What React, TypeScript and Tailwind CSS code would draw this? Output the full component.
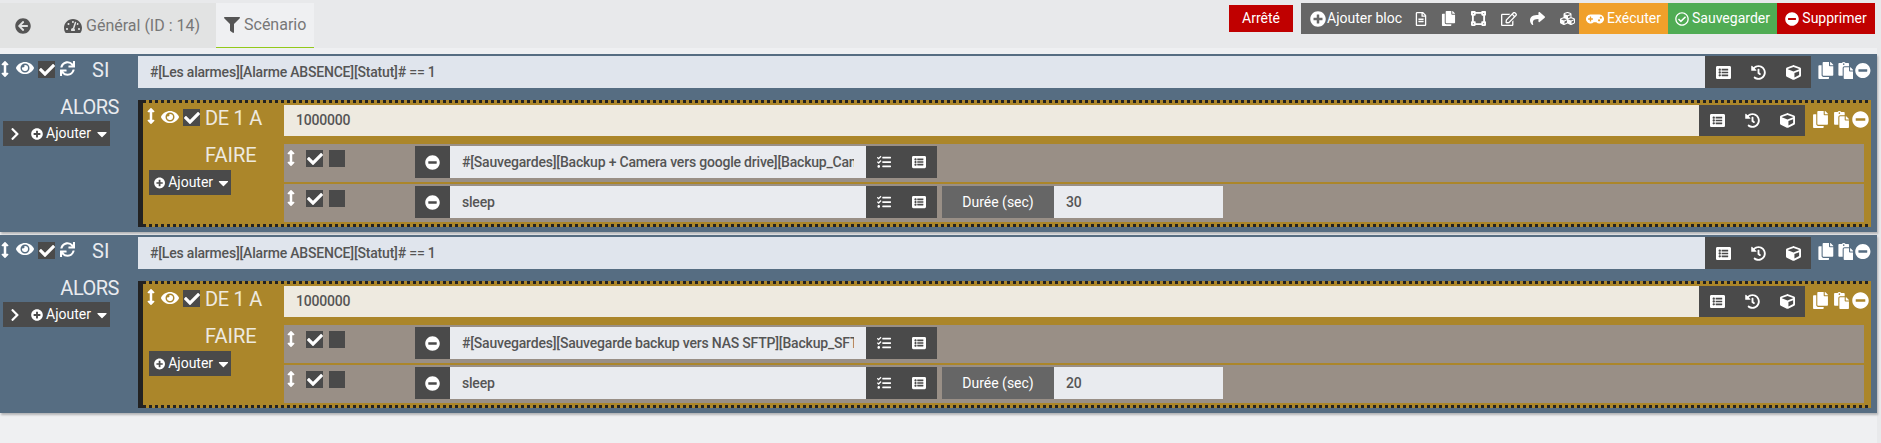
import type { ReactNode } from "react";
import {
  FaArrowCircleLeft,
  FaArrowsAltV,
  FaCaretDown,
  FaCheck,
  FaChevronRight,
  FaCopy,
  FaCube,
  FaCubes,
  FaEye,
  FaFilter,
  FaGamepad,
  FaHistory,
  FaListAlt,
  FaMinusCircle,
  FaPaste,
  FaPlusCircle,
  FaRegCheckCircle,
  FaRegEdit,
  FaRegFileAlt,
  FaShare,
  FaSync,
  FaTachometerAlt,
  FaTasks,
  FaVectorSquare,
} from "react-icons/fa";

const valueText = "text-[14px] font-medium tracking-[-0.2px] text-[#555]";
const titleText = "text-[20px] leading-[24px]";

function CheckBox() {
  return (
    <span className="flex h-[17px] w-[17px] items-center justify-center bg-[#4a4a4a] text-white">
      <FaCheck size={16} />
    </span>
  );
}

function AddButton({ expand, className }: { expand?: boolean; className: string }) {
  return (
    <div className={`flex h-[25px] items-center bg-[#4a4a4a] text-[14px] text-white ${className}`}>
      {expand && <FaChevronRight size={14} className="ml-[5px] mr-[9px]" />}
      <FaPlusCircle size={12} className={expand ? "" : "ml-[5px]"} />
      <span className="ml-[3px]">Ajouter</span>
      <FaCaretDown size={16} className="ml-[3px]" />
    </div>
  );
}

function LineActions({ className }: { className: string }) {
  return (
    <div className={`flex items-center justify-center gap-[20px] bg-[#4a4a4a] text-white ${className}`}>
      <FaListAlt size={15} />
      <FaHistory size={15} />
      <FaCube size={15} />
    </div>
  );
}

function BlockTools({ className }: { className: string }) {
  return (
    <div className={`flex items-start pt-[6px] text-white ${className}`}>
      <FaCopy size={17} />
      <FaPaste size={17} className="ml-[4px]" />
      <FaMinusCircle size={17} className="ml-[2px]" />
    </div>
  );
}

function ActionRow({ title, children }: { title: string; children?: ReactNode }) {
  return (
    <div className="flex h-[38px] items-start bg-[#998f86] pt-[2px]">
      <div className="flex w-[61px] items-start pl-[3px] pt-[4px] text-white">
        <FaArrowsAltV size={16} className="w-[8px]" />
        <span className="ml-[11px]">
          <CheckBox />
        </span>
        <span className="ml-[6px] h-[17px] w-[16px] bg-[#4a4a4a]" />
      </div>
      <div className="ml-[70px] flex h-[32px] w-[35px] items-center justify-center bg-[#4a4a4a] text-white">
        <FaMinusCircle size={15} />
      </div>
      <div className={`flex h-[32px] w-[416px] items-center whitespace-nowrap bg-[#e9ebef] px-[12px] ${valueText}`}>
        <span className="block w-full overflow-hidden">{title}</span>
      </div>
      <div className="flex h-[32px] w-[71px] items-center justify-center gap-[21px] bg-[#4a4a4a] text-white">
        <FaTasks size={14} />
        <FaListAlt size={14} />
      </div>
      {children}
    </div>
  );
}

function DottedStrip() {
  return <div className="h-[3px] bg-[repeating-linear-gradient(90deg,#222_0_3px,transparent_3px_6px)]" />;
}

function Block({ action, delay }: { action: string; delay: string }) {
  return (
    <div className="h-[178px] bg-[#566d82] pr-[6px] pt-[2px] shadow-[1px_2px_2px_rgba(0,0,0,0.25)]">
      {/* Ligne SI */}
      <div className="flex h-[32px]">
        <div className="flex w-[138px] items-start pl-[1px] pt-[5px] text-white">
          <FaArrowsAltV size={16} className="w-[8px]" />
          <FaEye size={18} className="ml-[7px] mt-[-2px]" />
          <span className="ml-[4px]">
            <CheckBox />
          </span>
          <FaSync size={15} className="ml-[5px]" />
          <span className={`ml-[17px] mt-[-3px] text-[#e9ebef] ${titleText}`}>SI</span>
        </div>
        <div className={`flex flex-1 items-center bg-[#e0e5ed] pl-[12px] ${valueText}`}>
          #[Les alarmes][Alarme ABSENCE][Statut]# == 1
        </div>
        <LineActions className="w-[106px]" />
        <BlockTools className="w-[60px] pl-[7px]" />
      </div>

      {/* Ligne ALORS */}
      <div className="mt-[12px] flex">
        <div className="w-[138px]">
          <div className="mt-[-7px] pr-[19px] text-right text-[20px] leading-[28px] tracking-[-0.5px] text-[#e9ebef]">ALORS</div>
          <AddButton expand className="ml-[3px] w-[107px]" />
        </div>

        <div className="flex h-[127px] flex-1 flex-col border-l-[5px] border-[#222] bg-[#ab862a]">
          <DottedStrip />
          <div className="mt-[2px] flex h-[31px]">
            <div className="flex w-[141px] items-start pl-[4px] pt-[4px] text-white">
              <FaArrowsAltV size={16} className="mt-[-1px] w-[8px]" />
              <FaEye size={18} className="ml-[6px] mt-[-1px]" />
              <span className="ml-[4px]">
                <CheckBox />
              </span>
              <span className={`ml-[5px] mt-[-3px] tracking-[-0.3px] text-[#eeeae0] ${titleText}`}>DE 1 A</span>
            </div>
            <div className={`flex flex-1 items-center bg-[#eeeae0] pl-[12px] ${valueText}`}>1000000</div>
            <LineActions className="w-[106px]" />
            <BlockTools className="w-[66px] pl-[7px]" />
          </div>

          <div className="mt-[8px] flex pr-[7px]">
            <div className="w-[141px]">
              <div className={`ml-[62px] mt-[-1px] text-[#eeeae0] ${titleText}`}>FAIRE</div>
              <AddButton className="ml-[6px] mt-[3px] w-[82px]" />
            </div>
            <div className="flex flex-1 flex-col gap-[2px]">
              <ActionRow title={action} />
              <ActionRow title="sleep">
                <div className="ml-[5px] flex h-[32px] w-[112px] items-center justify-center bg-[#666] text-[14px] text-white">
                  Durée (sec)
                </div>
                <div className={`flex h-[32px] w-[169px] items-center bg-[#e9ebef] pl-[12px] ${valueText}`}>{delay}</div>
              </ActionRow>
            </div>
          </div>
          <div className="mt-auto">
            <DottedStrip />
          </div>
        </div>
      </div>
    </div>
  );
}

export default function App() {
  return (
    <div className="flex h-[443px] w-[1881px] flex-col overflow-hidden bg-[#e8e9eb] font-['Roboto',sans-serif]">
      <div className="flex h-[48px] shrink-0 items-start justify-between pt-[3px]">
        <div className="flex h-[45px] bg-[#e2e3e3] text-[16px] text-[#777]">
          <div className="flex w-[64px] items-center pl-[15px] text-[#555]">
            <FaArrowCircleLeft size={16} />
          </div>
          <div className="flex w-[152px] items-center">
            <FaTachometerAlt size={18} className="text-[#555]" />
            <span className="ml-[4px]">Général (ID : 14)</span>
          </div>
          <div className="flex w-[98px] items-center border-b border-[#93c91b] bg-[#eff0f2] pl-[8px]">
            <FaFilter size={16} className="text-[#555]" />
            <span className="ml-[4px]">Scénario</span>
          </div>
        </div>

        <div className="mr-[6px] flex items-start text-[14px] text-white">
          <div className="mr-[8px] mt-[2px] flex h-[27px] w-[64px] items-center justify-center bg-[#c00000]">Arrêté</div>
          <div className="flex h-[31px] w-[278px] items-center bg-[#666] pl-[9px]">
            <FaPlusCircle size={16} />
            <span className="ml-[1px] mr-[12px]">Ajouter bloc</span>
            <FaRegFileAlt size={14} />
            <FaCopy size={15} className="ml-[13px]" />
            <FaVectorSquare size={15} className="ml-[15px]" />
            <FaRegEdit size={16} className="ml-[15px]" />
            <FaShare size={15} className="ml-[13px]" />
            <FaCubes size={15} className="ml-[15px]" />
          </div>
          <div className="flex h-[31px] w-[89px] items-center justify-center gap-[3px] bg-[#f0a02a]">
            <FaGamepad size={18} />
            <span>Exécuter</span>
          </div>
          <div className="flex h-[31px] w-[109px] items-center justify-center gap-[3px] bg-[#50ac54]">
            <FaRegCheckCircle size={14} />
            <span>Sauvegarder</span>
          </div>
          <div className="flex h-[31px] w-[98px] items-center justify-center gap-[3px] bg-[#c00000]">
            <FaMinusCircle size={14} />
            <span>Supprimer</span>
          </div>
        </div>
      </div>

      <div className="mr-[4px] flex flex-1 flex-col gap-[3px] bg-[#eff0f2] pt-[6px]">
        <Block action="#[Sauvegardes][Backup + Camera vers google drive][Backup_Camera]" delay="30" />
        <Block action="#[Sauvegardes][Sauvegarde backup vers NAS SFTP][Backup_SFTP]" delay="20" />
      </div>
    </div>
  );
}
